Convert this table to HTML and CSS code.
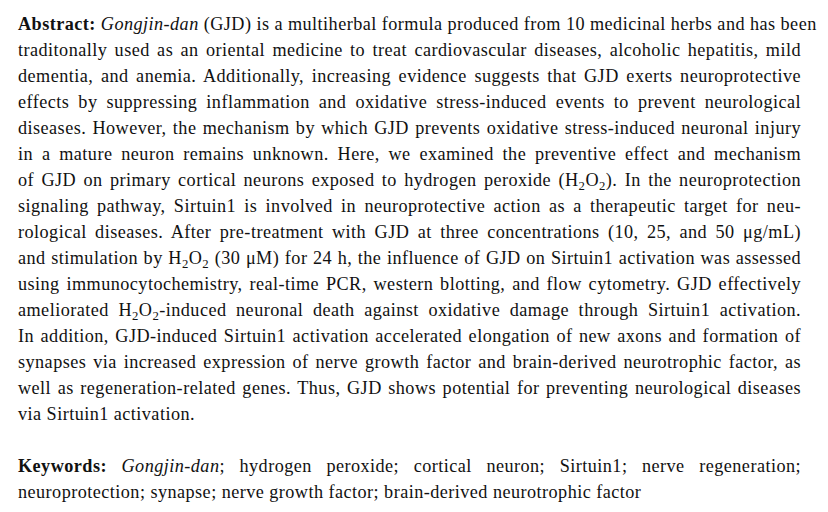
FILE: index.html
```html
<!DOCTYPE html>
<html lang="en">
<head>
<meta charset="utf-8">
<title>Abstract</title>
<link rel="stylesheet" href="styles.css">
</head>
<body>
<main class="page">
  <p class="block">
    <span class="line"><b class="label">Abstract:</b> <i>Gongjin-dan</i> (GJD) is a multiherbal formula produced from 10 medicinal herbs and has been</span>
    <span class="line">traditonally used as an oriental medicine to treat cardiovascular diseases, alcoholic hepatitis, mild</span>
    <span class="line">dementia, and anemia. Additionally, increasing evidence suggests that GJD exerts neuroprotective</span>
    <span class="line">effects by suppressing inflammation and oxidative stress-induced events to prevent neurological</span>
    <span class="line">diseases. However, the mechanism by which GJD prevents oxidative stress-induced neuronal injury</span>
    <span class="line">in a mature neuron remains unknown. Here, we examined the preventive effect and mechanism</span>
    <span class="line">of GJD on primary cortical neurons exposed to hydrogen peroxide (H<sub>2</sub>O<sub>2</sub>). In the neuroprotection</span>
    <span class="line">signaling pathway, Sirtuin1 is involved in neuroprotective action as a therapeutic target for neu-</span>
    <span class="line">rological diseases. After pre-treatment with GJD at three concentrations (10, 25, and 50 μg/mL)</span>
    <span class="line">and stimulation by H<sub>2</sub>O<sub>2</sub> (30 μM) for 24 h, the influence of GJD on Sirtuin1 activation was assessed</span>
    <span class="line">using immunocytochemistry, real-time PCR, western blotting, and flow cytometry. GJD effectively</span>
    <span class="line">ameliorated H<sub>2</sub>O<sub>2</sub>-induced neuronal death against oxidative damage through Sirtuin1 activation.</span>
    <span class="line">In addition, GJD-induced Sirtuin1 activation accelerated elongation of new axons and formation of</span>
    <span class="line">synapses via increased expression of nerve growth factor and brain-derived neurotrophic factor, as</span>
    <span class="line">well as regeneration-related genes. Thus, GJD shows potential for preventing neurological diseases</span>
    <span class="line last">via Sirtuin1 activation.</span>
  </p>
  <p class="block">
    <span class="line"><b class="label">Keywords:</b> <i>Gongjin-dan</i>; hydrogen peroxide; cortical neuron; Sirtuin1; nerve regeneration;</span>
    <span class="line last">neuroprotection; synapse; nerve growth factor; brain-derived neurotrophic factor</span>
  </p>
</main>
</body>
</html>
```

FILE: styles.css
```css
html, body {
  margin: 0;
  padding: 0;
  background: #ffffff;
}

.page {
  width: 783px;
  padding: 11px 0 0 18px;
  font-family: "Liberation Serif", "Times New Roman", serif;
  font-size: 18.2px;
  line-height: 26px;
  letter-spacing: 0.45px;
  color: #111111;
}

.block {
  margin: 0 0 26px 0;
}

.line {
  display: block;
  text-align: justify;
  text-align-last: justify;
  white-space: nowrap;
}

.line.last {
  text-align: left;
  text-align-last: left;
}

.label {
  font-weight: bold;
}

sub {
  font-size: 0.7em;
  line-height: 0;
  vertical-align: -0.28em;
}
```
